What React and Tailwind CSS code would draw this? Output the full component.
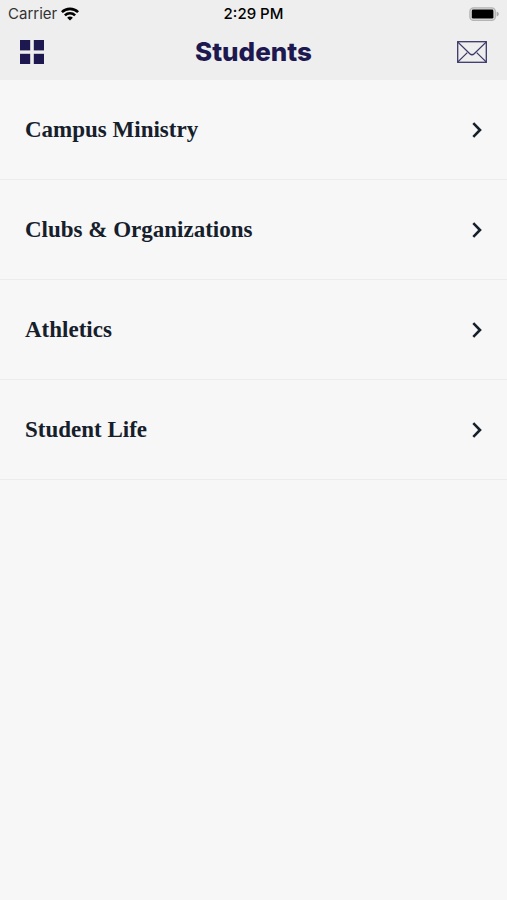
import React from 'react';

const sections = [
    { id: 'ministry', title: 'Campus Ministry' },
    { id: 'clubs', title: 'Clubs & Organizations' },
    { id: 'athletics', title: 'Athletics' },
    { id: 'life', title: 'Student Life' },
];

const WifiIcon = () => (
    <svg width="18" height="14" viewBox="0 0 18 14" fill="none" stroke="#000" strokeWidth="2.6" aria-hidden="true">
        <path d="M0.9 5.2C5.4 0.7 12.6 0.7 17.1 5.2" />
        <path d="M3.9 8.4C6.7 5.6 11.3 5.6 14.1 8.4" />
        <path d="M9 13.6L6.1 10.7C7.7 9.2 10.3 9.2 11.9 10.7Z" fill="#000" stroke="none" />
    </svg>
);

const BatteryIcon = () => (
    <svg width="30" height="14" viewBox="0 0 30 14" aria-hidden="true">
        <rect x="0.9" y="0.8" width="25.4" height="12.6" rx="3.6" fill="#dcdcdc" stroke="#b4b4b4" strokeWidth="1.3" />
        <rect x="2.8" y="2.6" width="21.6" height="9" rx="1.4" fill="#000" />
        <path d="M27.6 4.6C29 5 29.8 6 29.8 7S29 9 27.6 9.4Z" fill="#a9a9a9" />
    </svg>
);

const GridIcon = () => (
    <svg width="24" height="24" viewBox="0 0 24 24" fill="#1d1950" aria-hidden="true">
        <rect x="0" y="0" width="10.2" height="10.4" />
        <rect x="13.8" y="0" width="10.2" height="10.4" />
        <rect x="0" y="13.8" width="10.2" height="10.2" />
        <rect x="13.8" y="13.8" width="10.2" height="10.2" />
    </svg>
);

const MailIcon = () => (
    <svg width="30" height="22" viewBox="0 0 30 22" fill="none" stroke="#3b3768" strokeWidth="1.3" aria-hidden="true">
        <rect x="0.7" y="0.7" width="28.6" height="20.6" />
        <path d="M0.9 1.1L12.8 12.8Q15 14.8 17.2 12.8L29.1 1.1" />
        <path d="M0.9 20.9L10.3 11.6M29.1 20.9L19.7 11.6" />
    </svg>
);

const ChevronIcon = () => (
    <svg width="10" height="16" viewBox="0 0 10 16" fill="none" stroke="#15202b" strokeWidth="2.6" aria-hidden="true">
        <path d="M1.3 1.2L8 8L1.3 14.8" />
    </svg>
);

const StatusBar = () => (
    <div className="grid grid-cols-3 items-center h-7 px-2 font-['Inter',sans-serif] text-[15px] leading-5 text-black">
        <div className="flex items-center gap-1 text-[#333]">
            Carrier
            <WifiIcon />
        </div>
        <div className="text-center font-medium">2:29 PM</div>
        <div className="flex justify-end">
            <BatteryIcon />
        </div>
    </div>
);

const App = () => {
    return (
        <div className="min-h-screen bg-[#f7f7f7]">
            <header className="h-20 bg-[#eeeeee]">
                <StatusBar />
                <div className="flex items-center justify-between h-12 px-5">
                    <button type="button" aria-label="Menu" className="w-8">
                        <GridIcon />
                    </button>
                    <h1 className="font-['Inter',sans-serif] text-[26px] leading-8 font-extrabold text-[#1d1950]">
                        Students
                    </h1>
                    <button type="button" aria-label="Messages" className="flex justify-end w-8">
                        <MailIcon />
                    </button>
                </div>
            </header>

            <nav>
                <ul>
                    {sections.map((section) => (
                        <li key={section.id}>
                            <a
                                href={`#${section.id}`}
                                className="flex items-center justify-between h-[100px] px-[25px] border-b border-[#ececec] font-['Liberation_Serif',serif] text-[23px] leading-8 font-bold text-[#15202b]"
                            >
                                {section.title}
                                <ChevronIcon />
                            </a>
                        </li>
                    ))}
                </ul>
            </nav>
        </div>
    );
};

export default App;
